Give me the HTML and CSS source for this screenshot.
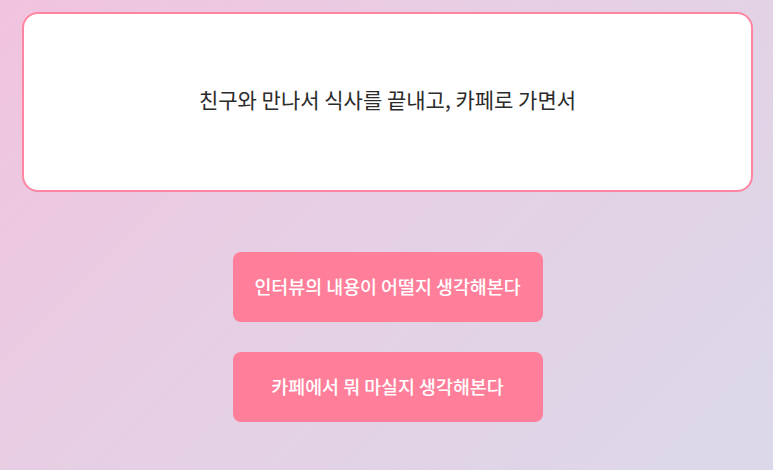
FILE: index.html
```html
<!DOCTYPE html>
<html>
<head>
    <title>Story</title>
    <link rel="stylesheet" href="styles.css">
</head>
<body>
    <div class="page">
        <div class="story-card">
            <p class="story-text">친구와 만나서 식사를 끝내고, 카페로 가면서</p>
        </div>

        <div class="choices">
            <button class="choice">인터뷰의 내용이 어떨지 생각해본다</button>
            <button class="choice">카페에서 뭐 마실지 생각해본다</button>
        </div>
    </div>
</body>
</html>
```

FILE: styles.css
```css
html, body {
    height: 100%;
}

body {
    margin: 0;
    font-family: "Noto Sans CJK KR", "Noto Sans", sans-serif;
    background: linear-gradient(135deg, #f1c3de 0%, #e6cfe4 45%, #dcd8ea 100%);
}

.page {
    padding: 12px 20px 0 22px;
    display: flex;
    flex-direction: column;
    align-items: center;
}

.story-card {
    box-sizing: border-box;
    width: 100%;
    height: 180px;
    padding-bottom: 6px;
    background-color: #fff;
    border: 2px solid #ff85a2;
    border-radius: 16px;
    display: flex;
    align-items: center;
    justify-content: center;
}

.story-text {
    margin: 0;
    font-size: 21px;
    color: #2b2b2b;
}

.choices {
    margin-top: 60px;
    display: flex;
    flex-direction: column;
    gap: 30px;
}

.choice {
    width: 310px;
    height: 70px;
    padding-bottom: 3px;
    border: none;
    border-radius: 8px;
    background-color: #ff7f9b;
    color: #fff;
    font-family: inherit;
    font-size: 18.4px;
    font-weight: 500;
    cursor: pointer;
}
```
